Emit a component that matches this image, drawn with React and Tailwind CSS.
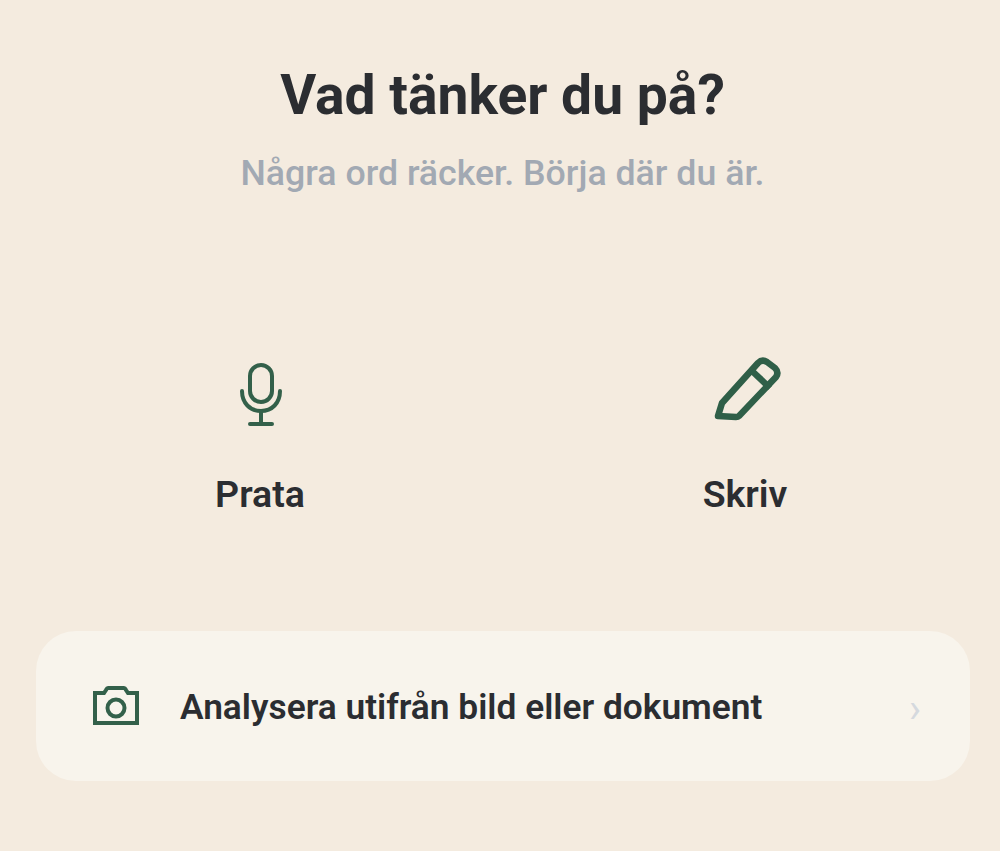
import React from 'react';

const MicIcon = () => (
  <svg className="ml-[2px]" width="48" height="66" viewBox="0 0 48 66" fill="none" stroke="#33604a" strokeWidth="4" strokeLinecap="round" strokeLinejoin="round">
    <rect x="13" y="3" width="22" height="37" rx="11" />
    <path d="M5 29c0 12 8 20 19 20s19-8 19-20" />
    <path d="M24 49v13M13 62h22" />
  </svg>
);

const PencilIcon = () => (
  <svg className="ml-[4px] -mt-[6px] mb-[6px]" width="70" height="66" viewBox="0 0 70 66" fill="none" stroke="#2f5f48" strokeWidth="6.500" strokeLinejoin="round">
    <path d="M6 60l4-13L46 7c3-3 6-3 9-1l8 6c3 3 3 6 1 9L27 60c-1 1-2 1-3 1z" />
    <path d="M40 15l18 17" />
  </svg>
);

const CameraIcon = () => (
  <svg width="48" height="40" viewBox="0 0 48 40" fill="none" stroke="#33604a" strokeWidth="4" strokeLinejoin="miter">
    <path d="M3 7h9l2-3c.5-1 1-2 2-2h16c1 0 1.500 1 2 2l2 3h9v30H3z" />
    <circle cx="24" cy="22" r="8.500" />
  </svg>
);

export default function App() {
  return (
    <div className="w-[1000px] h-[851px] bg-[#f4ebdf] overflow-hidden font-['Roboto',sans-serif]">
      <div className="pt-[60px] pl-[5px] text-center">
        <h1 className="text-[55.200px] leading-[70px] font-bold text-[#2b2d31]">Vad tänker du på?</h1>
        <p className="mt-[21px] text-[35.700px] leading-[44px] font-medium text-[#a2a9b3]">Några ord räcker. Börja där du är.</p>
      </div>

      <div className="mt-[167px] grid grid-cols-[484px_486px] px-[18px]">
        <button className="flex flex-col items-center">
          <MicIcon />
          <span className="mt-[42px] text-[37.500px] leading-[48px] font-semibold text-[#2b2d31]">Prata</span>
        </button>
        <button className="flex flex-col items-center">
          <PencilIcon />
          <span className="mt-[42px] text-[37.500px] leading-[48px] font-semibold text-[#2b2d31]">Skriv</span>
        </button>
      </div>

      <div className="mt-[113px] mx-[36px] w-[934px] h-[150px] rounded-[40px] bg-[#f8f4ec] flex items-center pl-[56px] pr-[48px]">
        <CameraIcon />
        <span className="ml-[40px] pt-[2px] flex-1 text-[35.300px] leading-[44px] font-semibold text-[#2b2d31]">Analysera utifrån bild eller dokument</span>
        <span className="-ml-[3px] pr-[1px] pt-[5px] text-[40px] leading-none text-[#d5d9de]">›</span>
      </div>
    </div>
  );
}
